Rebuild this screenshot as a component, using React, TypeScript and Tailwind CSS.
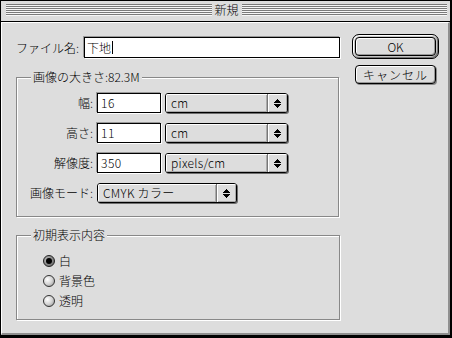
import React from "react";

const F = "font-['Noto_Sans_CJK_JP','Noto_Sans',sans-serif] font-light";

function Arrows() {
  return (
    <svg width="7" height="9" viewBox="0 0 7 9" shapeRendering="crispEdges" fill="#000">
      <rect x="3" y="0" width="1" height="1" />
      <rect x="2" y="1" width="3" height="1" />
      <rect x="1" y="2" width="5" height="1" />
      <rect x="0" y="3" width="7" height="1" />
      <rect x="0" y="5" width="7" height="1" />
      <rect x="1" y="6" width="5" height="1" />
      <rect x="2" y="7" width="3" height="1" />
      <rect x="3" y="8" width="1" height="1" />
    </svg>
  );
}

function Popup({ label, w }: { label: string; w: string }) {
  return (
    <div
      className={`${w} h-[20px] rounded-[3px] border border-black bg-[#dddddd] shadow-[1px_1px_0_#6f6f6f] flex overflow-hidden`}
    >
      <div className="flex-1 flex items-center pl-[5px] shadow-[inset_1px_1px_0_#ffffff,inset_-1px_-1px_0_#aaaaaa] leading-[12px] tracking-[0.3px]">
        {label}
      </div>
      <div className="w-[20px] flex items-center justify-center border-l border-[#777777] shadow-[inset_1px_1px_0_#ffffff,inset_-1px_-1px_0_#aaaaaa]">
        <Arrows />
      </div>
    </div>
  );
}

function Field({ value, w }: { value: string; w: string }) {
  return (
    <div
      className={`${w} h-[20px] border border-black bg-white shadow-[-1px_-1px_0_#999999,1px_1px_0_#ffffff] flex items-center pl-[3px] leading-[12px] tracking-[0.5px]`}
    >
      <span>{value}</span>
    </div>
  );
}

function Radio({ checked }: { checked?: boolean }) {
  return checked ? (
    <div className="w-[12px] h-[12px] rounded-full border border-[#222222] bg-[radial-gradient(circle_at_35%_35%,#bbbbbb_0%,#777777_70%,#555555_100%)] flex items-center justify-center">
      <div className="w-[6px] h-[6px] rounded-full bg-black" />
    </div>
  ) : (
    <div className="w-[12px] h-[12px] rounded-full border border-[#333333] bg-[radial-gradient(circle_at_35%_35%,#ffffff_0%,#d4d4d4_50%,#8a8a8a_100%)]" />
  );
}

function Row({ label, children }: { label: string; children: React.ReactNode }) {
  return (
    <div className="flex items-center h-[20px] gap-[4px]">
      <div className="w-[76px] text-right leading-[12px]">{label}</div>
      {children}
    </div>
  );
}

export default function App() {
  return (
    <div
      className={`w-[452px] h-[338px] bg-black pl-px pt-px pr-[2px] pb-[3px] flex flex-col text-[12px] leading-none text-black ${F}`}
    >
      {/* title bar */}
      <div className="h-[20px] shrink-0 bg-[#dddddd] pl-[5px] pr-[3px] pt-[3px] flex items-start">
        <div className="flex-1 h-[12px] bg-[repeating-linear-gradient(to_bottom,#7a7a7a_0px,#7a7a7a_1px,#f6f6f6_1px,#f6f6f6_2px)]" />
        <div className="h-[12px] leading-[12px] px-[3px]">新規</div>
        <div className="flex-1 h-[12px] bg-[repeating-linear-gradient(to_bottom,#7a7a7a_0px,#7a7a7a_1px,#f6f6f6_1px,#f6f6f6_2px)]" />
      </div>
      <div className="h-px shrink-0 bg-black" />

      {/* content */}
      <div className="flex-1 bg-[#dddddd] border-t border-l border-r-2 border-b-2 border-t-white border-l-white border-r-[#8f8f8f] border-b-[#8f8f8f] flex pl-[14px] pt-[11px]">
        {/* left column */}
        <div className="w-[324px] flex flex-col">
          <div className="mt-[3px] flex items-center h-[21px]">
            <div className="w-[68px] leading-[12px]">ファイル名:</div>
            <div className="flex-1 h-[21px] border border-black bg-white shadow-[-1px_-1px_0_#999999,1px_1px_0_#ffffff] flex items-center pl-[2px] leading-[12px]">
              <span>下地</span>
              <span className="w-px h-[13px] bg-black ml-[1px]" />
            </div>
          </div>

          {/* group 1 */}
          <div className="mt-[19px] w-[323px] h-[140px] border border-[#888888] shadow-[inset_1px_1px_0_#ffffff,1px_1px_0_#ffffff] flex flex-col">
            <div className="-mt-[7px] ml-[14px] px-[2px] bg-[#dddddd] w-fit h-[12px] leading-[12px]">
              画像の大きさ:82.3M
            </div>
            <div className="mt-[10px] flex flex-col gap-[10px]">
              <Row label="幅:">
                <Field value="16" w="w-[64px]" />
                <Popup label="cm" w="w-[123px]" />
              </Row>
              <Row label="高さ:">
                <Field value="11" w="w-[64px]" />
                <Popup label="cm" w="w-[123px]" />
              </Row>
              <Row label="解像度:">
                <Field value="350" w="w-[64px]" />
                <Popup label="pixels/cm" w="w-[123px]" />
              </Row>
              <Row label="画像モード:">
                <Popup label="CMYK カラー" w="w-[140px]" />
              </Row>
            </div>
          </div>

          {/* group 2 */}
          <div className="mt-[18px] w-[324px] h-[85px] border border-[#888888] shadow-[inset_1px_1px_0_#ffffff,1px_1px_0_#ffffff] flex flex-col">
            <div className="-mt-[7px] ml-[14px] px-[2px] bg-[#dddddd] w-fit h-[12px] leading-[12px]">
              初期表示内容
            </div>
            <div className="mt-[10px] flex flex-col">
              <div className="h-[20px] flex items-center gap-[4px] pl-[26px]">
                <Radio checked />
                <span className="leading-[12px]">白</span>
              </div>
              <div className="h-[20px] flex items-center gap-[4px] pl-[26px]">
                <Radio />
                <span className="leading-[12px]">背景色</span>
              </div>
              <div className="h-[20px] flex items-center gap-[4px] pl-[26px]">
                <Radio />
                <span className="leading-[12px]">透明</span>
              </div>
            </div>
          </div>
        </div>

        {/* right column */}
        <div className="ml-[12px] flex flex-col">
          <div className="w-[87px] h-[25px] rounded-[7px] border border-black p-[2px] bg-[#c4c4c4] shadow-[inset_1px_1px_0_#ffffff,inset_-1px_-1px_0_#777777]">
            <div className="w-full h-full rounded-[4px] border border-black bg-[#dddddd] shadow-[inset_1px_1px_0_#ffffff,inset_-1px_-1px_0_#999999] flex items-center justify-center leading-[12px]">
              OK
            </div>
          </div>
          <div className="mt-[6px] ml-[3px] w-[81px] h-[19px] rounded-[4px] border border-black bg-[#dddddd] shadow-[inset_1px_1px_0_#ffffff,inset_-1px_-1px_0_#999999,1px_1px_0_#888888] flex items-center justify-center leading-[12px] tracking-[1px]">
            キャンセル
          </div>
        </div>
      </div>
    </div>
  );
}
